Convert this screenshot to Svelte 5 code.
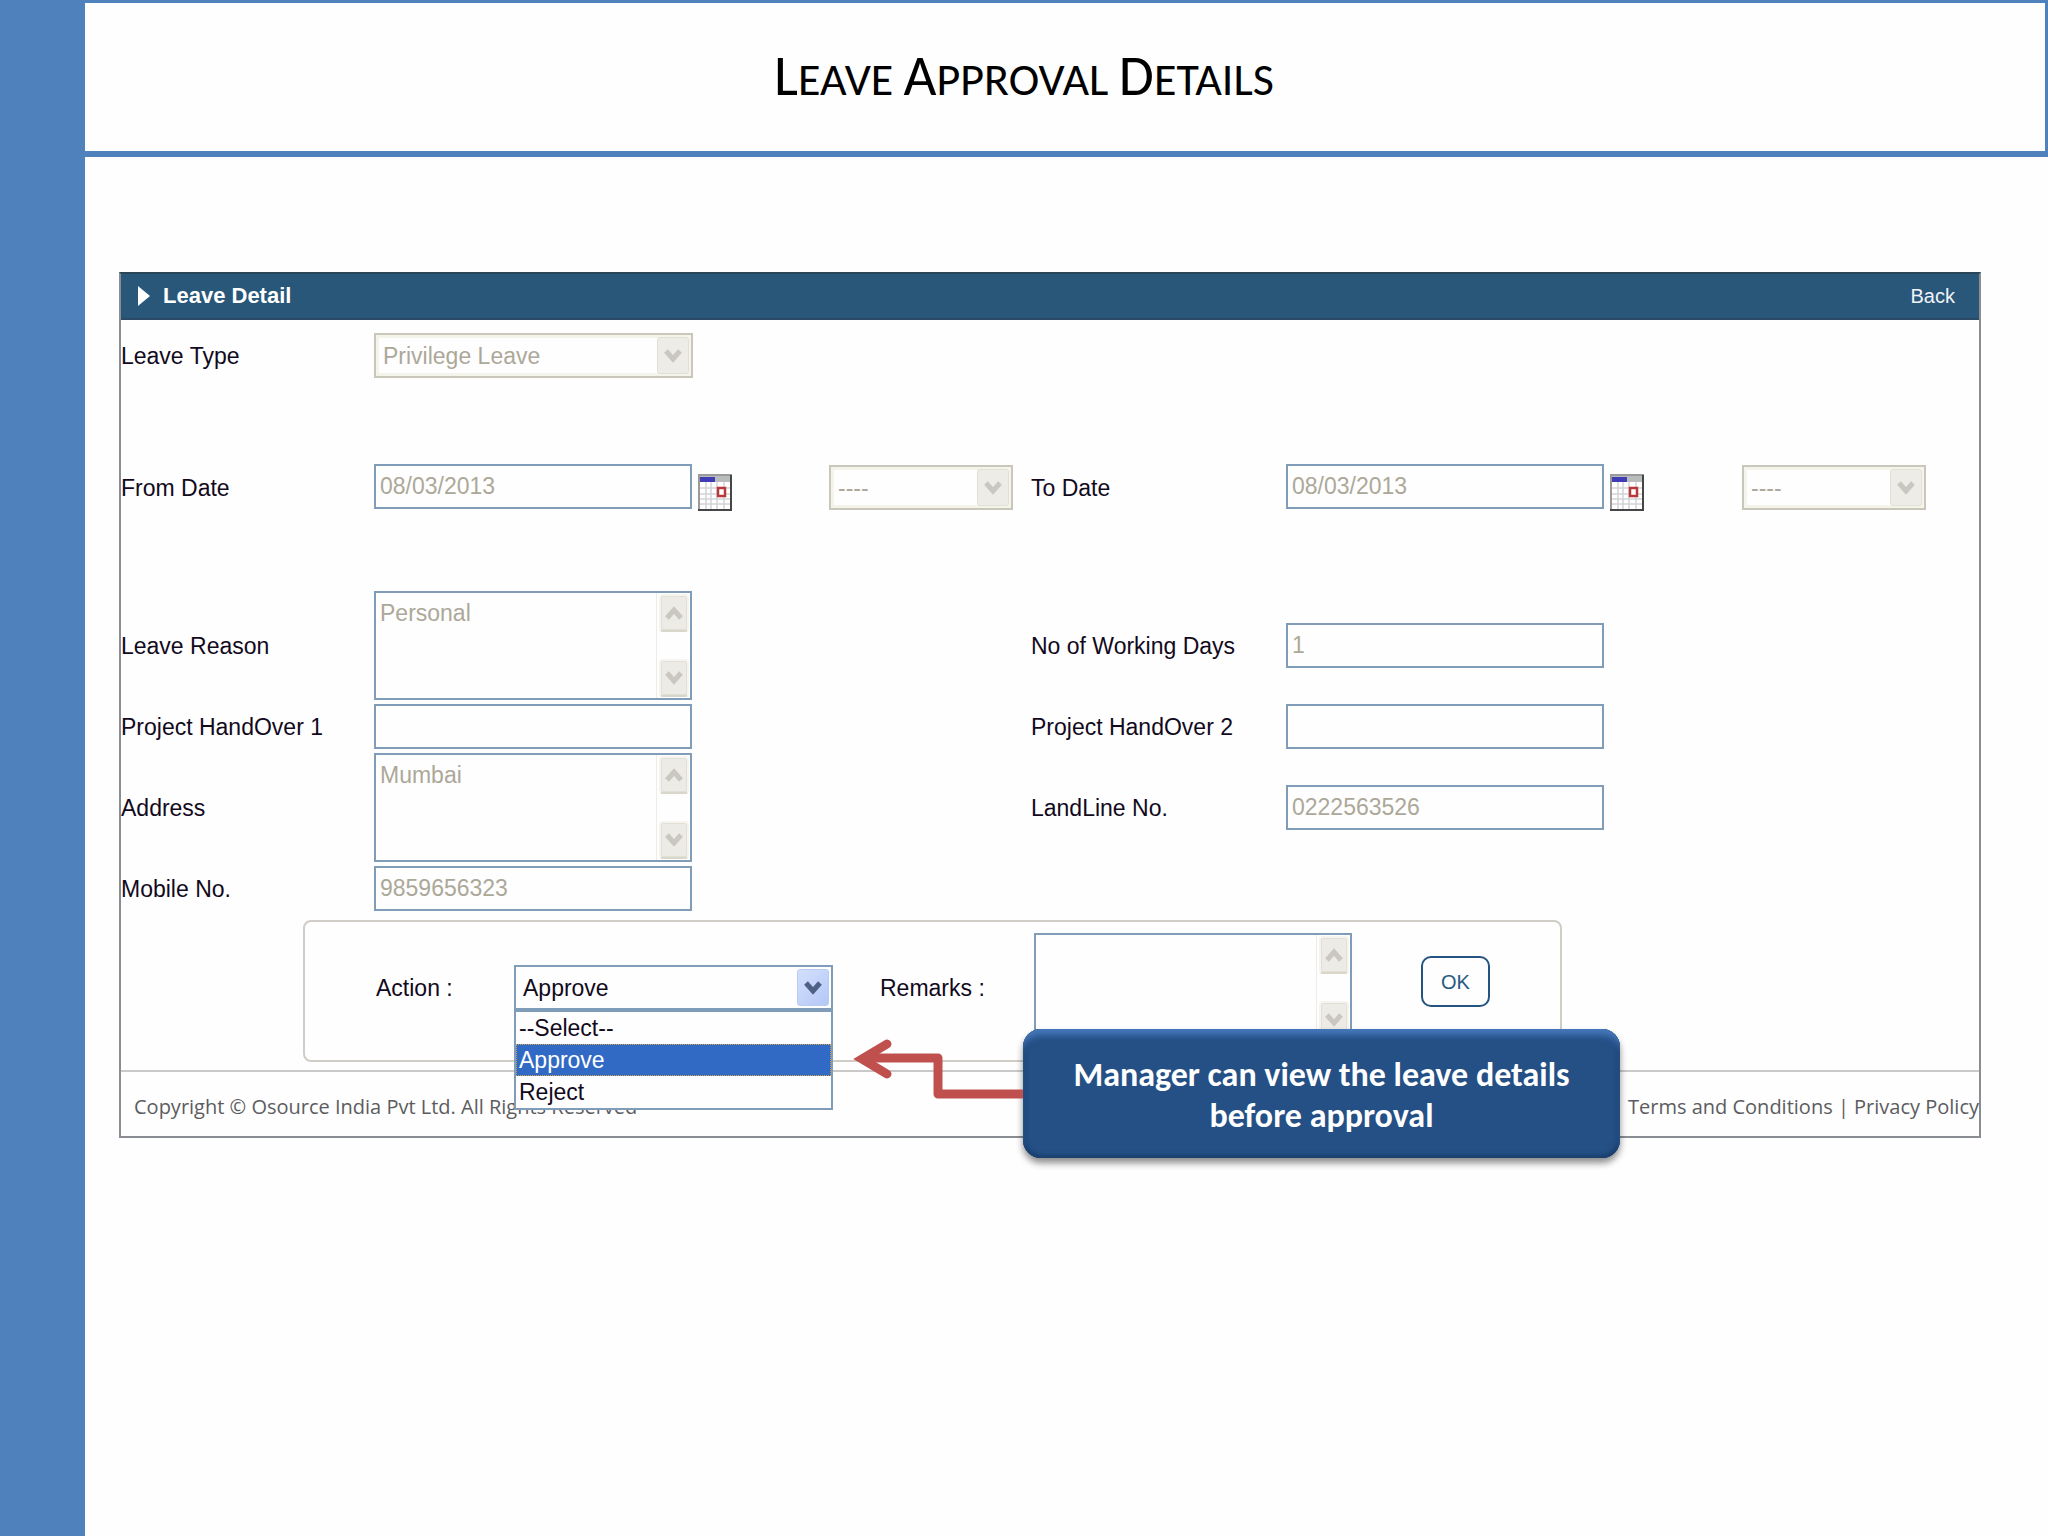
<script>
  const leaveTypes = ['Privilege Leave'];
  const actions = ['--Select--', 'Approve', 'Reject'];

  let action = 'Approve';
  let remarks = '';
</script>

{#snippet chevron(dir)}
  <svg class="chevron" viewBox="0 0 18 14" width="18" height="14" aria-hidden="true">
    <path d={dir === 'up' ? 'M2 12 L9 4 L16 12' : 'M2 2 L9 10 L16 2'} />
  </svg>
{/snippet}

{#snippet scrollbar()}
  <span class="scrollbar" aria-hidden="true">
    <span class="thumb">{@render chevron('up')}</span>
    <span class="thumb">{@render chevron('down')}</span>
  </span>
{/snippet}

{#snippet calendar(label)}
  <button class="calendar" type="button" aria-label={label}>
    <svg viewBox="0 0 34 37" width="34" height="37">
      <rect width="34" height="37" fill="#9a9a9a" />
      <rect x="2" y="2" width="30" height="33" fill="#fff" />
      <rect x="2" y="2" width="30" height="6" fill="#b9bcbc" />
      <rect x="2" y="3" width="15" height="5" fill="#3f3cb4" />
      <path d="M2 14H32M2 20H32M2 25H32M2 30H32M8 8V35M13 8V35M19 8V35M26 8V35" stroke="#d3d3d8" stroke-width="1.5" fill="none" />
      <rect x="20" y="14" width="7" height="8" fill="#fff" stroke="#b8393c" stroke-width="2.5" />
      <path d="M33 1V37M0 36H34" stroke="#454548" stroke-width="2" fill="none" />
    </svg>
  </button>
{/snippet}

<div class="slide">
  <aside></aside>

  <main>
    <header class="title">
      <h1><span>Leave</span> <span>Approval</span> <span>Details</span></h1>
    </header>

    <form class="panel">
      <div class="panel-head">
        <svg viewBox="0 0 12 20" width="12" height="20" aria-hidden="true"><path d="M0 0 L12 10 L0 20 Z" fill="#fff" /></svg>
        <h2>Leave Detail</h2>
        <a href="#back">Back</a>
      </div>

      <div class="fields">
        <div class="row">
          <label for="type">Leave Type</label>
          <span class="select wide disabled">
            <select id="type" disabled>
              {#each leaveTypes as t}<option>{t}</option>{/each}
            </select>
            <span class="arrow">{@render chevron('down')}</span>
          </span>
        </div>

        <div class="row dates">
          <label for="from">From Date</label>
          <div class="date">
            <input id="from" value="08/03/2013" disabled />
            {@render calendar('Pick from date')}
          </div>
          <span class="select disabled">
            <select aria-label="From session" disabled><option>----</option></select>
            <span class="arrow">{@render chevron('down')}</span>
          </span>
          <label for="to">To Date</label>
          <div class="date">
            <input id="to" value="08/03/2013" disabled />
            {@render calendar('Pick to date')}
          </div>
          <span class="select disabled">
            <select aria-label="To session" disabled><option>----</option></select>
            <span class="arrow">{@render chevron('down')}</span>
          </span>
        </div>

        <div class="row">
          <label for="reason">Leave Reason</label>
          <span class="area">
            <textarea id="reason" value="Personal" disabled></textarea>
            {@render scrollbar()}
          </span>
          <label class="second" for="days">No of Working Days</label>
          <input id="days" value="1" disabled />
        </div>

        <div class="row">
          <label for="hand1">Project HandOver 1</label>
          <input id="hand1" disabled />
          <label class="second" for="hand2">Project HandOver 2</label>
          <input id="hand2" disabled />
        </div>

        <div class="row">
          <label for="address">Address</label>
          <span class="area">
            <textarea id="address" value="Mumbai" disabled></textarea>
            {@render scrollbar()}
          </span>
          <label class="second" for="landline">LandLine No.</label>
          <input id="landline" value="0222563526" disabled />
        </div>

        <div class="row">
          <label for="mobile">Mobile No.</label>
          <input id="mobile" value="9859656323" disabled />
        </div>
      </div>

      <div class="actions">
        <label class="action-label" for="action">Action :</label>
        <span class="select wide">
          <select id="action" bind:value={action}>
            {#each actions as a}<option>{a}</option>{/each}
          </select>
          <span class="arrow">{@render chevron('down')}</span>
          <ul class="menu" role="listbox" aria-label="Action">
            {#each actions as a}
              <li role="option" aria-selected={a === action}>{a}</li>
            {/each}
          </ul>
        </span>
        <label class="remarks-label" for="remarks">Remarks :</label>
        <span class="area">
          <textarea id="remarks" bind:value={remarks}></textarea>
          {@render scrollbar()}
        </span>
        <button class="ok" type="button">OK</button>

        <div class="callout">
          <svg class="pointer" viewBox="0 0 170 64" width="170" height="64" aria-hidden="true">
            <path d="M170 51 H85 V15 H12" />
            <path d="M34 1 L9 16 L34 31" />
          </svg>
          <p>Manager can view the leave details before approval</p>
        </div>
      </div>

      <footer>
        <span>Copyright © Osource India Pvt Ltd. All Rights Reserved</span>
        <nav><a href="#terms">Terms and Conditions</a> | <a href="#privacy">Privacy Policy</a></nav>
      </footer>
    </form>
  </main>
</div>

<style>
  :global(body) {
    margin: 0;
    background: #fefefe;
  }

  * {
    box-sizing: border-box;
  }

  .slide {
    display: grid;
    grid-template-columns: 85px 1fr;
    min-height: 100vh;
    font-family: 'Liberation Sans', Arial, sans-serif;
    font-size: 23px;
    line-height: 30px;
    color: #120a1c;
  }

  aside {
    background: #4f81bd;
  }

  .title {
    display: flex;
    align-items: center;
    justify-content: center;
    height: 157px;
    padding-right: 82px;
    border: solid #4f81bd;
    border-width: 3px 3px 6px 0;
  }

  h1 {
    margin: 0;
    font: 400 46px/60px Carlito, Lato, sans-serif;
    text-transform: uppercase;
    color: #000;
  }

  h1 span {
    display: inline-block;
  }

  h1 span::first-letter {
    font-size: 57px;
  }

  .panel {
    margin: 115px 67px 0 34px;
    border: 2px solid #8a8d92;
    border-top-color: #2b4558;
  }

  .panel-head {
    display: flex;
    align-items: center;
    height: 46px;
    padding: 0 24px 0 17px;
    background: #285779;
    border-bottom: 2px solid #2c4a66;
    color: #fff;
  }

  h2 {
    margin: 0 auto 0 13px;
    font-size: 22px;
    font-weight: 700;
  }

  .panel-head a {
    color: #f0f4f8;
    font-size: 20px;
    text-decoration: none;
  }

  .fields {
    padding-top: 13px;
  }

  .row {
    display: grid;
    grid-template-columns: 253fr 455fr 202fr 255fr 456fr 237fr;
    align-items: center;
    margin-bottom: 4px;
  }

  .dates {
    margin: 86px 0 80px;
  }

  .second {
    grid-column: 4;
  }

  .date {
    display: flex;
    align-items: flex-start;
    gap: 6px;
  }

  .calendar {
    display: flex;
    margin-top: 10px;
    padding: 0;
    border: 0;
    background: none;
  }

  input,
  textarea,
  select {
    width: 318px;
    height: 45px;
    margin: 0;
    padding: 0 4px;
    border: 2px solid #7f9db9;
    border-radius: 0;
    background: #fefefe;
    font: inherit;
    color: #120a1c;
  }

  input:disabled,
  textarea:disabled,
  select:disabled {
    color: #aca899;
    opacity: 1;
  }

  textarea {
    display: block;
    height: 109px;
    padding: 5px 40px 5px 4px;
    resize: none;
    overflow: hidden;
  }

  .area {
    position: relative;
    width: 318px;
  }

  .scrollbar {
    position: absolute;
    inset: 2px 2px 2px auto;
    display: flex;
    flex-direction: column;
    justify-content: space-between;
    width: 34px;
    padding: 1px 1px 1px 2px;
    border-left: 1px solid #eeede5;
  }

  .thumb {
    display: flex;
    align-items: center;
    justify-content: center;
    height: 38px;
    border: 2px solid #f5f4ee;
    border-bottom-color: #d9d7ca;
    border-radius: 4px;
    background: #ecebe6;
    box-shadow: inset 0 0 0 1px #e1dfd6;
  }

  .chevron path {
    fill: none;
    stroke: #c9c7bf;
    stroke-width: 5;
  }

  .select {
    position: relative;
    display: block;
    width: 184px;
  }

  .wide {
    width: 319px;
  }

  select {
    appearance: none;
    display: block;
    width: 100%;
    padding: 0 40px 0 7px;
  }

  .disabled select {
    border-color: #c9c7ba;
    box-shadow: inset 0 0 0 3px #f5f4ea;
  }

  .arrow {
    position: absolute;
    top: 4px;
    right: 4px;
    display: flex;
    align-items: center;
    justify-content: center;
    width: 32px;
    height: 37px;
    border: 1px solid #b8cbf3;
    border-radius: 3px;
    background: linear-gradient(135deg, #d3e0fd, #b4c8f6);
    pointer-events: none;
  }

  .arrow .chevron path {
    stroke: #4d6185;
  }

  .disabled .arrow {
    border-color: #e2e0d6;
    background: #edece6;
  }

  .disabled .arrow .chevron path {
    stroke: #c9c7bf;
  }

  .actions {
    position: relative;
    display: flex;
    align-items: center;
    width: fit-content;
    margin: 9px 0 8px 182px;
    padding: 11px 70px 18px 71px;
    border: 2px solid #d0cdc6;
    border-radius: 8px;
  }

  .action-label {
    width: 138px;
  }

  .remarks-label {
    width: 154px;
    margin-left: 47px;
  }

  .menu {
    position: absolute;
    top: 100%;
    left: 0;
    z-index: 1;
    width: 100%;
    margin: 0;
    padding: 0;
    border: 2px solid #7f9db9;
    background: #fefefe;
    list-style: none;
  }

  .menu li {
    padding: 0 2px;
    border: 1px solid transparent;
  }

  .menu li[aria-selected='true'] {
    border: 1px dotted #d3a24a;
    background: #316ac5;
    color: #fff;
  }

  .ok {
    width: 69px;
    height: 51px;
    margin: 0 0 12px 69px;
    padding: 0;
    border: 2px solid #255480;
    border-radius: 10px;
    background: #fefefe;
    color: #255a82;
    font: inherit;
    font-size: 20px;
  }

  .callout {
    position: absolute;
    top: 107px;
    left: 718px;
    z-index: 2;
    width: 597px;
    padding: 25px 40px 22px;
    border-radius: 18px;
    background: #245086;
    box-shadow:
      inset 0 8px 6px -2px #4678ba,
      inset 0 -3px 4px #1b3f6d,
      inset 3px 0 4px #1e4577,
      inset -3px 0 4px #1e4577,
      0 5px 7px rgba(0, 0, 0, 0.45);
  }

  .callout p {
    margin: 0;
    font: 700 34px/41px Carlito, Lato, sans-serif;
    text-align: center;
    color: #fff;
  }

  .pointer {
    position: absolute;
    top: 14px;
    right: 100%;
    overflow: visible;
  }

  .pointer path {
    fill: none;
    stroke: #c0504d;
    stroke-width: 9;
    stroke-linejoin: round;
  }

  .pointer path + path {
    stroke-linecap: round;
    stroke-linejoin: miter;
  }

  footer {
    display: flex;
    justify-content: space-between;
    padding: 20px 0 14px 13px;
    border-top: 2px solid #c9c9c9;
    font-family: 'Open Sans', sans-serif;
    font-size: 20px;
    color: #5c5c60;
  }

  footer a {
    color: inherit;
    text-decoration: none;
  }
</style>
